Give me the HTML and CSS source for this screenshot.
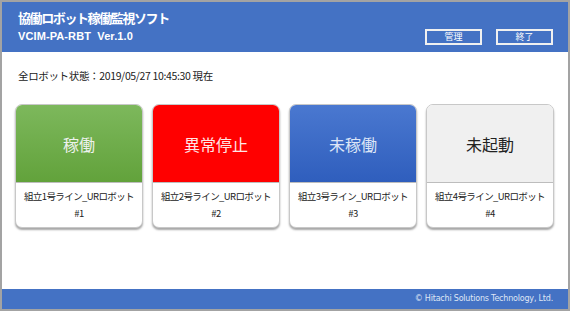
FILE: index.html
```html
<!DOCTYPE html>
<html lang="ja">
<head>
<meta charset="utf-8">
<link rel="stylesheet" href="styles.css">
</head>
<body>
<div class="app">
  <header class="header">
    <div class="titles">
      <div class="title">協働ロボット稼働監視ソフト</div>
      <div class="version">VCIM-PA-RBT&nbsp;&nbsp;Ver.1.0</div>
    </div>
    <div class="buttons">
      <button class="btn">管理</button>
      <button class="btn">終了</button>
    </div>
  </header>
  <main class="main">
    <div class="status">全ロボット状態：2019/05/27 10:45:30 現在</div>
    <div class="cards">
      <div class="card">
        <div class="state green">稼働</div>
        <div class="name">組立1号ライン_URロボット<br>#1</div>
      </div>
      <div class="card">
        <div class="state red">異常停止</div>
        <div class="name">組立2号ライン_URロボット<br>#2</div>
      </div>
      <div class="card">
        <div class="state blue">未稼働</div>
        <div class="name">組立3号ライン_URロボット<br>#3</div>
      </div>
      <div class="card">
        <div class="state gray">未起動</div>
        <div class="name">組立4号ライン_URロボット<br>#4</div>
      </div>
    </div>
  </main>
  <footer class="footer">© Hitachi Solutions Technology, Ltd.</footer>
</div>
</body>
</html>
```
FILE: styles.css
```css
* { box-sizing: border-box; }
html, body { margin: 0; padding: 0; }
body {
  font-family: "Noto Sans CJK JP", "Noto Sans", sans-serif;
  background: #fff;
}
.app {
  width: 570px;
  height: 311px;
  border: 2px solid #a3a3a3;
  display: flex;
  flex-direction: column;
  background: #fff;
}
.header {
  height: 50px;
  background: #4472c4;
  color: #fff;
  display: flex;
  justify-content: space-between;
  align-items: flex-end;
  padding: 0 15px 7px 16px;
}
.titles {
  align-self: stretch;
  padding-top: 7px;
}
.title {
  font-size: 13px;
  font-weight: bold;
  line-height: 17px;
  letter-spacing: -1.4px;
}
.version {
  font-family: "Liberation Sans", Arial, sans-serif;
  font-size: 11px;
  font-weight: bold;
  line-height: 13px;
  margin-top: 4px;
  letter-spacing: 0.1px;
}
.buttons {
  display: flex;
  gap: 14px;
}
.btn {
  width: 57px;
  height: 16px;
  border: 2px solid #f0f0f0;
  background: #4472c4;
  color: #fff;
  font-family: "Noto Sans CJK JP", sans-serif;
  font-size: 9px;
  line-height: 10px;
  padding: 0;
}
.main {
  flex: 1;
  padding: 0 14px 0 13px;
}
.status {
  font-size: 10.5px;
  line-height: 14px;
  color: #222;
  margin: 17px 0 0 3px;
  letter-spacing: -0.35px;
}
.cards {
  display: grid;
  grid-template-columns: repeat(4, 128px);
  column-gap: 9px;
  margin-top: 21px;
}
.card {
  height: 124px;
  border: 1px solid #c8c8c8;
  border-radius: 7px;
  overflow: hidden;
  box-shadow: 0 2px 2px rgba(0,0,0,0.35);
  display: flex;
  flex-direction: column;
  background: #fff;
}
.state {
  height: 78px;
  display: flex;
  align-items: center;
  justify-content: center;
  font-size: 16px;
  color: #eef2ee;
  border-bottom: 1px solid #bdbdbd;
}
.green { background: linear-gradient(#7db85c, #62a23b); }
.red { background: #ff0000; color: #ffe6e6; }
.blue { background: linear-gradient(#4a78d0, #2f5ebd); color: #dde6f7; }
.gray { background: #f0f0f0; color: #222; }
.name {
  flex: 1;
  display: flex;
  align-items: center;
  justify-content: center;
  text-align: center;
  font-size: 9.5px;
  line-height: 17px;
  letter-spacing: -0.6px;
  color: #222;
}
.footer {
  height: 20px;
  background: #4472c4;
  color: #dfe6f5;
  font-family: "DejaVu Sans", sans-serif;
  font-size: 8px;
  line-height: 20px;
  letter-spacing: -0.2px;
  text-align: right;
  padding-right: 15px;
}
```
